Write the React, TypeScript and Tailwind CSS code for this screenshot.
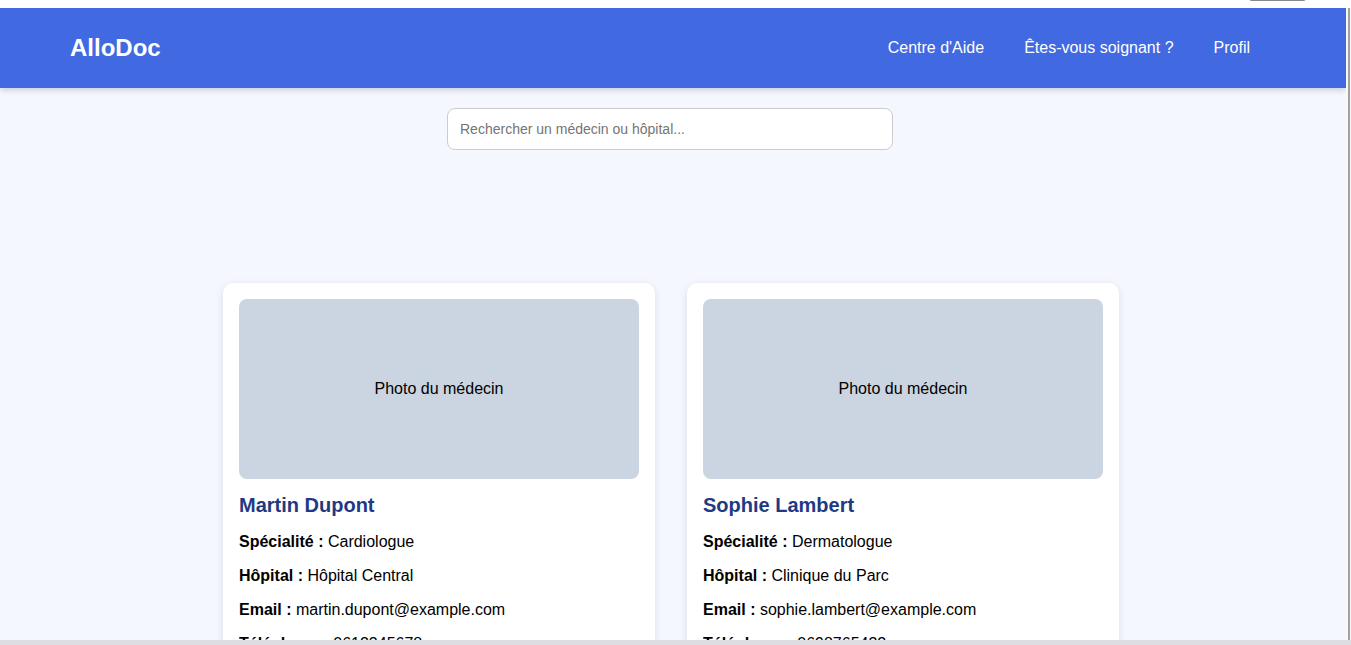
import React from "react";

const doctors = [
  {
    name: "Martin Dupont",
    specialite: "Cardiologue",
    hopital: "Hôpital Central",
    email: "martin.dupont@example.com",
    tel: "0612345678",
  },
  {
    name: "Sophie Lambert",
    specialite: "Dermatologue",
    hopital: "Clinique du Parc",
    email: "sophie.lambert@example.com",
    tel: "0698765432",
  },
];

export default function App() {
  return (
    <div
      className="w-[1351px] h-[645px] overflow-hidden flex flex-col bg-white text-black"
      style={{ fontFamily: '"Liberation Sans", Arial, sans-serif' }}
    >
      <div className="h-[8px] shrink-0 flex justify-end pr-[46px] bg-white">
        <div className="w-[55px] h-[1px] bg-[#8a8a8a] rounded-b" />
      </div>
      <div className="flex-1 flex min-h-0">
        <div className="w-[1346px] flex flex-col bg-[#f4f8fe] overflow-hidden">
          <header className="h-[80px] shrink-0 bg-[#4169e1] flex items-center justify-between pl-[70px] pr-[96px] shadow-[0_2px_6px_rgba(0,0,0,0.18)] relative z-10">
            <div className="text-[24px] font-bold text-white">AlloDoc</div>
            <nav className="flex items-center gap-[40px] text-[16px] text-white">
              <span>Centre d'Aide</span>
              <span>Êtes-vous soignant ?</span>
              <span>Profil</span>
            </nav>
          </header>
          <div className="w-[1342px] flex flex-col items-center">
            <div className="mt-[20px] ml-[-2px] w-[446px] h-[42px] bg-white border border-[#cccccc] rounded-[8px] flex items-center px-[12px] text-[14px] text-[#757575]">
              Rechercher un médecin ou hôpital...
            </div>
            <div className="mt-[133px] flex gap-[32px]">
              {doctors.map((d) => (
                <div
                  key={d.name}
                  className="w-[432px] bg-white rounded-[10px] p-[16px] shadow-[0_2px_8px_rgba(0,0,0,0.1)]"
                >
                  <div className="w-[400px] h-[180px] bg-[#cbd5e1] rounded-[8px] flex items-center justify-center text-[16px]">
                    Photo du médecin
                  </div>
                  <h3 className="mt-[15px] text-[20px] font-bold text-[#1f3a82] leading-[23px]">
                    {d.name}
                  </h3>
                  <div className="mt-[16px] flex flex-col gap-[16px] text-[16px] leading-[18px]">
                    <p>
                      <b>Spécialité :</b> {d.specialite}
                    </p>
                    <p>
                      <b>Hôpital :</b> {d.hopital}
                    </p>
                    <p>
                      <b>Email :</b> {d.email}
                    </p>
                    <p>
                      <b>Téléphone :</b> {d.tel}
                    </p>
                  </div>
                </div>
              ))}
            </div>
          </div>
        </div>
        <div className="w-[5px] bg-[#f8f8f8] flex justify-end">
          <div className="w-[2px] h-full bg-[#a0a0a0] mr-[1px]" />
        </div>
      </div>
      <div className="h-[5px] shrink-0 bg-[#dedee2]" />
    </div>
  );
}
